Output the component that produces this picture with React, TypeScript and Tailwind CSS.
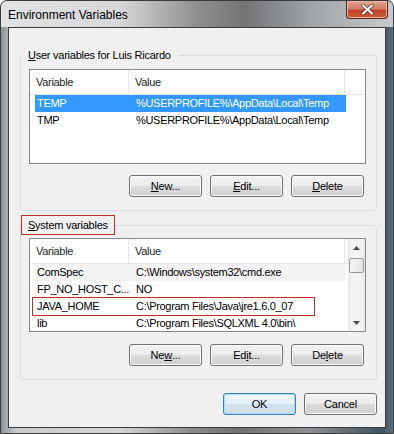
import type { ReactNode } from 'react'

const USER_VARS = [
  { name: 'TEMP', value: '%USERPROFILE%\\AppData\\Local\\Temp' },
  { name: 'TMP', value: '%USERPROFILE%\\AppData\\Local\\Temp' },
]

const SYSTEM_VARS = [
  { name: 'ComSpec', value: 'C:\\Windows\\system32\\cmd.exe' },
  { name: 'FP_NO_HOST_C...', value: 'NO' },
  { name: 'JAVA_HOME', value: 'C:\\Program Files\\Java\\jre1.6.0_07' },
  { name: 'lib', value: 'C:\\Program Files\\SQLXML 4.0\\bin\\' },
]

type Row = { name: string; value: string }

function WinButton({ children, isDefault = false }: { children: ReactNode; isDefault?: boolean }) {
  return (
    <button
      type="button"
      className={`w-[73px] h-[22px] rounded-[3px] border text-[11px] tracking-[-0.2px] leading-none text-black flex items-center justify-center ${
        isDefault
          ? 'border-[#3c7fb1] bg-[linear-gradient(#eef7fc_0%,#e4f0f7_50%,#d5e5ef_50%,#ccdce7_100%)] shadow-[inset_0_0_0_1px_#a9def7]'
          : 'border-[#707070] bg-[linear-gradient(#f2f2f2_0%,#ebebeb_50%,#dddddd_50%,#cfcfcf_100%)] shadow-[inset_0_0_0_1px_#fcfcfc]'
      }`}
    >
      {children}
    </button>
  )
}

function Arrow({ down = false }: { down?: boolean }) {
  return (
    <div className="h-[17px] w-full flex items-center justify-center">
      <svg width="7" height="4" viewBox="0 0 7 4">
        <path d={down ? 'M0 0 L7 0 L3.5 4 Z' : 'M0 4 L3.5 0 L7 4 Z'} fill="#4a4a4a" />
      </svg>
    </div>
  )
}

function ListView({
  rows,
  selected,
  tinted,
  marked,
  scroll = false,
  height,
}: {
  rows: Row[]
  selected?: number
  tinted?: number
  marked?: number
  scroll?: boolean
  height: string
}) {
  return (
    <div className={`ml-[8px] w-[337px] ${height} border border-[#828790] bg-white flex overflow-hidden`}>
      <div className="flex-1 min-w-0">
        {/* header */}
        <div className="h-[25px] flex border-b border-[#e5e5e5] text-[11px] tracking-[-0.3px] text-[#1e1e1e]">
          <div className="w-[99px] pl-[6px] flex items-center border-r border-[#e3e8ee]">Variable</div>
          <div className="w-[216px] pl-[6px] flex items-center border-r border-[#e3e8ee]">Value</div>
          <div className="flex-1" />
        </div>
        {rows.map((r, i) => (
          <div
            key={r.name}
            className={`relative ml-[5px] w-[311px] h-[17px] flex items-center text-[11px] tracking-[-0.3px] whitespace-nowrap ${
              i === selected ? 'bg-[#3399ff] text-white' : i === tinted ? 'bg-[#f3f3f3] text-black' : 'text-black'
            }`}
          >
            <div className="w-[94px] pl-[2px]">{r.name}</div>
            <div className="pl-[7px]">{r.value}</div>
            {i === marked && (
              <div className="absolute left-[-3px] top-[-1px] w-[283px] h-[19px] border border-[#c42b2b]" />
            )}
          </div>
        ))}
      </div>
      {scroll && (
        <div className="w-[17px] h-full flex flex-col items-center bg-[linear-gradient(90deg,#e6e6e6,#f4f4f4_25%,#f4f4f4_75%,#e9e9e9)]">
          <Arrow />
          <div className="w-[15px] h-[15px] mt-[2px] rounded-[2px] border border-[#9a9a9a] bg-[linear-gradient(90deg,#f6f6f6,#e4e4e4)]" />
          <div className="flex-1" />
          <Arrow down />
        </div>
      )}
    </div>
  )
}

function GroupBox({ label, marked = false, children, className = '' }: { label: ReactNode; marked?: boolean; children: ReactNode; className?: string }) {
  return (
    <fieldset className={`w-[357px] border border-[#d5dfe5] rounded-[3px] pb-[13px] ${className}`}>
      <legend
        className={`ml-0 px-[6px] h-[20px] leading-[18px] text-[11px] tracking-[-0.25px] text-black border ${
          marked ? 'border-[#c42b2b]' : 'border-transparent'
        }`}
      >
        {label}
      </legend>
      {children}
    </fieldset>
  )
}

export default function App() {
  return (
    <div className="w-[394px] h-[434px] overflow-hidden rounded-t-[7px] border border-[#3a3a3a] flex flex-col font-['Liberation_Sans',Arial,sans-serif] bg-[linear-gradient(90deg,#8f9396_0%,#c9cdd0_4%,#d4d7da_30%,#8c8e90_48%,#6f7173_60%,#8e9194_78%,#3f5461_97%,#5b6d78_100%)]">
      {/* Title bar */}
      <div className="h-[26px] flex items-start justify-between pl-[7px] pr-[5px] bg-[linear-gradient(90deg,#e1e3e5_0%,#d6d8da_30%,#8d8f91_50%,#727476_62%,#a2a5a8_80%,#c8cbce_100%)]">
        <span className="mt-[6px] text-[12px] leading-[16px] text-black">Environment Variables</span>
        <div className="w-[42px] h-[18px] rounded-b-[4px] border border-t-0 border-[#5b2418] bg-[linear-gradient(#e3a494_0%,#d47f68_45%,#bf4526_55%,#cc5a36_100%)] shadow-[inset_0_0_0_1px_#ecb5a6] flex items-center justify-center">
          <svg width="13" height="11" viewBox="0 0 13 11">
            <path d="M2 1.5 L11 9.5 M11 1.5 L2 9.5" stroke="#6a2a1a" strokeWidth="3.6" strokeLinecap="round" />
            <path d="M2 1.5 L11 9.5 M11 1.5 L2 9.5" stroke="#ffffff" strokeWidth="2.2" strokeLinecap="round" />
          </svg>
        </div>
      </div>

      {/* Client area */}
      <div className="mx-[7px] h-[401px] border border-[#3c3c3c] bg-[#f0f0f0] pl-[11px] flex flex-col">
        <GroupBox className="mt-[17px]" label={<><u>U</u>ser variables for Luis Ricardo</>}>
          <div className="mt-[4px]">
            <ListView rows={USER_VARS} selected={0} height="h-[95px]" />
          </div>
          <div className="mt-[11px] mr-[12px] flex justify-end gap-[8px]">
            <WinButton><u>N</u>ew...</WinButton>
            <WinButton><u>E</u>dit...</WinButton>
            <WinButton><u>D</u>elete</WinButton>
          </div>
        </GroupBox>

        <GroupBox className="mt-[4px]" marked label={<><u>S</u>ystem variables</>}>
          <div className="mt-[3px]">
            <ListView rows={SYSTEM_VARS} tinted={0} marked={2} scroll height="h-[94px]" />
          </div>
          <div className="mt-[12px] mr-[12px] flex justify-end gap-[8px]">
            <WinButton>Ne<u>w</u>...</WinButton>
            <WinButton>Ed<u>i</u>t...</WinButton>
            <WinButton>De<u>l</u>ete</WinButton>
          </div>
        </GroupBox>

        <div className="w-[357px] mt-[13px] flex justify-end gap-[8px]">
          <WinButton isDefault>OK</WinButton>
          <WinButton>Cancel</WinButton>
        </div>
      </div>
    </div>
  )
}
